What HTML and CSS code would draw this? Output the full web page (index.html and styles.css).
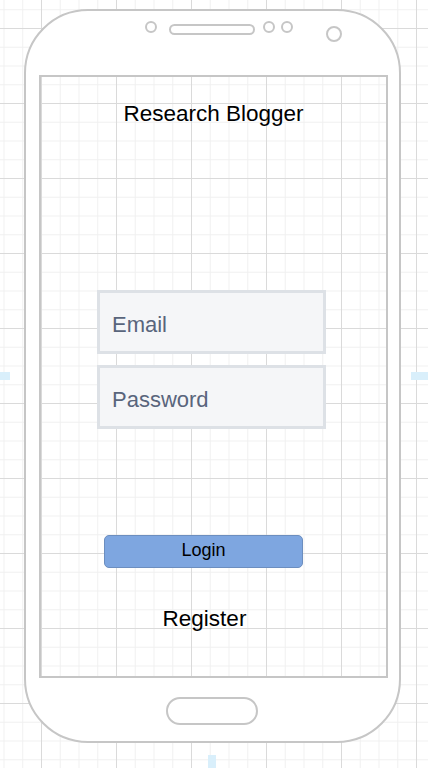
FILE: index.html
```html
<!DOCTYPE html>
<html lang="en">
<head>
<meta charset="utf-8">
<title>Research Blogger</title>
<link rel="stylesheet" href="styles.css">
</head>
<body>
<div class="phone">
  <div class="sensors">
    <span class="dot dot-a"></span>
    <span class="speaker"></span>
    <span class="dot dot-b"></span>
    <span class="dot dot-c"></span>
    <span class="camera"></span>
  </div>
  <div class="screen">
    <div class="title">Research Blogger</div>
    <div class="field field-email">Email</div>
    <div class="field field-pass">Password</div>
    <div class="login">Login</div>
    <div class="register">Register</div>
  </div>
  <div class="home"></div>
</div>
<div class="guide guide-left"></div>
<div class="guide guide-right"></div>
<div class="guide guide-bottom"></div>
</body>
</html>
```
FILE: styles.css
```css
* { box-sizing: border-box; }
html, body { margin: 0; padding: 0; }
body {
  width: 428px;
  height: 768px;
  overflow: hidden;
  position: relative;
  padding: 9px 0 0 24px;
  font-family: "Liberation Sans", Arial, sans-serif;
  background-color: #ffffff;
  background-image:
    linear-gradient(#dadada 1px, transparent 1px),
    linear-gradient(90deg, #dadada 1px, transparent 1px),
    linear-gradient(#f0f0f0 1px, transparent 1px),
    linear-gradient(90deg, #f0f0f0 1px, transparent 1px);
  background-size: 75px 75px, 75px 75px, 18.75px 18.75px, 18.75px 18.75px;
  background-position: 41px 28px;
}
.phone {
  width: 377px;
  height: 734px;
  border: 2px solid #c6c6c6;
  border-radius: 64px;
  background: #ffffff;
  display: flex;
  flex-direction: column;
}
.sensors {
  height: 64px;
  display: flex;
  align-items: flex-start;
  padding-left: 119px;
}
.dot {
  width: 12px;
  height: 12px;
  border: 2px solid #c6c6c6;
  border-radius: 50%;
  margin-top: 10px;
}
.speaker {
  width: 86px;
  height: 11px;
  border: 2px solid #c6c6c6;
  border-radius: 6px;
  margin: 13px 0 0 12px;
}
.dot-b { margin-left: 8px; }
.dot-c { margin-left: 6px; }
.camera {
  width: 16px;
  height: 16px;
  border: 2px solid #c6c6c6;
  border-radius: 50%;
  margin: 15px 0 0 33px;
}
.screen {
  width: 349px;
  height: 603px;
  margin-left: 13px;
  border: 2px solid #c6c6c6;
  background-color: #ffffff;
  background-image:
    linear-gradient(#dadada 1px, transparent 1px),
    linear-gradient(90deg, #dadada 1px, transparent 1px),
    linear-gradient(#f0f0f0 1px, transparent 1px),
    linear-gradient(90deg, #f0f0f0 1px, transparent 1px);
  background-size: 75px 75px, 75px 75px, 18.75px 18.75px, 18.75px 18.75px;
  background-position: 0px 26px;
  padding-top: 24px;
  display: flex;
  flex-direction: column;
  align-items: flex-start;
}
.title {
  align-self: stretch;
  text-align: center;
  font-size: 22.5px;
  line-height: 26px;
  color: #000000;
}
.field {
  width: 229px;
  height: 64px;
  margin-left: 56px;
  border: 3px solid #dde1e6;
  background: #f5f6f8;
  color: #59657c;
  font-size: 22px;
  padding: 6px 0 0 12px;
  line-height: 52px;
}
.field-email { margin-top: 163px; }
.field-pass { margin-top: 11px; }
.login {
  width: 199px;
  height: 33px;
  margin: 106px 0 0 63px;
  background: #7ea6e0;
  border: 1px solid #6c8ebf;
  border-radius: 5px;
  text-align: center;
  font-size: 18px;
  line-height: 29px;
  color: #000000;
}
.register {
  width: 201px;
  margin: 38px 0 0 63px;
  text-align: center;
  font-size: 22.5px;
  line-height: 26px;
  color: #000000;
}
.home {
  width: 92px;
  height: 28px;
  margin: 19px 0 0 140px;
  border: 2px solid #c6c6c6;
  border-radius: 14px;
}
.guide {
  position: absolute;
  background: #d9effb;
}
.guide-left { left: 0; top: 372px; width: 10px; height: 8px; }
.guide-right { left: 411px; top: 372px; width: 17px; height: 8px; }
.guide-bottom { left: 208px; top: 755px; width: 8px; height: 13px; }
```
